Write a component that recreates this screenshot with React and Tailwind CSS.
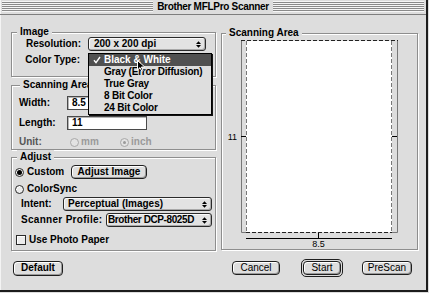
const Arrows = () => (
  <svg width="7" height="9" viewBox="0 0 7 9">
    <path d="M1 4 L3.5 1.2 L6 4 Z M1 5 L3.5 7.8 L6 5 Z" fill="#000" />
  </svg>
);

function Popup({ className = "", textClass = "pl-[5px]", children }) {
  return (
    <div
      className={`flex h-[14px] items-center rounded-[3px] border border-[#2a2a2a] bg-[#e2e2e2] shadow-[inset_1px_1px_0_#fafafa,inset_-1px_-1px_0_#a8a8a8] ${className}`}
    >
      <span className={`flex-1 overflow-hidden whitespace-nowrap text-[10px] font-bold leading-[12px] ${textClass}`}>
        {children}
      </span>
      <span className="flex w-[13px] shrink-0 items-center justify-center">
        <Arrows />
      </span>
    </div>
  );
}

function Button({ className = "", bold = false, children }) {
  return (
    <div
      className={`flex items-center justify-center rounded-[4px] border border-[#1e1e1e] bg-[#dedede] text-[10px] leading-[12px] shadow-[inset_1px_1px_0_#fff,inset_-1px_-1px_0_#9a9a9a] ${
        bold ? "font-bold" : "font-normal"
      } ${className}`}
    >
      {children}
    </div>
  );
}

function Field({ className = "", children }) {
  return (
    <div
      className={`flex h-[14px] items-center border border-[#4a4a4a] bg-white pl-[4px] text-[10px] font-bold leading-[12px] shadow-[inset_1px_1px_0_#b5b5b5] ${className}`}
    >
      {children}
    </div>
  );
}

function Radio({ on = false, disabled = false }) {
  return (
    <span
      className={`flex h-[9px] w-[9px] shrink-0 items-center justify-center rounded-full border ${
        disabled ? "border-[#a8a8a8] bg-[#e2e2e2]" : "border-[#2a2a2a] bg-[#ececec] shadow-[inset_1px_1px_0_#fff]"
      }`}
    >
      {on && (
        <span className={`rounded-full ${disabled ? "h-[3px] w-[3px] bg-[#9a9a9a]" : "h-[5px] w-[5px] bg-black"}`} />
      )}
    </span>
  );
}

function Group({ label, labelLeft, className = "", children }) {
  return (
    <div className={`relative border border-[#8e8e8e] shadow-[inset_1px_1px_0_#fff,1px_1px_0_#fff] ${className}`}>
      <span className={`absolute top-[-8px] bg-[#dddddd] px-[3px] text-[10px] font-bold leading-[14px] ${labelLeft}`}>
        {label}
      </span>
      {children}
    </div>
  );
}

const Label = ({ className = "", children }) => (
  <span className={`shrink-0 whitespace-nowrap text-[10px] font-bold leading-[12px] ${className}`}>{children}</span>
);

function TitleBar() {
  const stripes =
    "h-[11px] flex-1 bg-[image:repeating-linear-gradient(to_bottom,#f6f6f6_0px,#f6f6f6_1px,#8a8a8a_1px,#8a8a8a_2px)]";
  return (
    <div className="flex h-[15px] items-start border-b border-[#7e7e7e] px-[2px] pt-[1px]">
      <div className={stripes} />
      <span className="px-[4px] text-[10px] font-bold leading-[12px] tracking-[-0.3px]">Brother MFLPro Scanner</span>
      <div className={stripes} />
    </div>
  );
}

function ColorMenu() {
  const items = ["Gray (Error Diffusion)", "True Gray", "8 Bit Color", "24 Bit Color"];
  return (
    <div className="absolute left-[88px] top-[53px] w-[124px] border border-black bg-[#dedede] shadow-[1px_1px_0_#111]">
      <div className="relative flex h-[12px] items-center bg-[#505050] pl-[15px] text-[10px] font-bold leading-[12px] text-white">
        <svg className="absolute left-[4px] top-[2px]" width="8" height="8" viewBox="0 0 8 8">
          <path d="M1 4.2 L3 6.6 L7 1" stroke="#fff" strokeWidth="1.4" fill="none" />
        </svg>
        Black &amp; White
      </div>
      {items.map((t) => (
        <div key={t} className="flex h-[12px] items-center pl-[15px] text-[10px] font-bold leading-[12px] tracking-[-0.2px]">
          {t}
        </div>
      ))}
    </div>
  );
}

function Preview() {
  const ff = "Liberation Sans, Arial, sans-serif";
  return (
    <svg width="195" height="215" className="block">
      <rect x="24" y="7" width="146" height="191" fill="#fff" />
      <path d="M19.5 6 V198.5 H24 M175.5 6 V198.5 H170" stroke="#777" fill="none" />
      <path d="M19 6.5 H176" stroke="#222" strokeDasharray="4 2" />
      <path d="M24.5 7 V198 M169.5 7 V198" stroke="#777" strokeDasharray="4 2" />
      <path d="M24 198.5 H170" stroke="#222" strokeDasharray="4 2" />
      <path d="M19 102.5 H24 M170 102.5 H175" stroke="#000" />
      <path d="M24 204.5 H170 M96.5 199 V205" stroke="#000" />
      <text x="15" y="106" textAnchor="end" fontSize="9" fontFamily={ff}>
        11
      </text>
      <text x="96.5" y="213" textAnchor="middle" fontSize="9" fontFamily={ff}>
        8.5
      </text>
    </svg>
  );
}

export default function App() {
  return (
    <div className="relative h-[293px] w-[429px] overflow-hidden bg-[#dddddd] font-['Liberation_Sans',Arial,sans-serif] text-black">
      <div className="flex h-[292px] w-[428px] flex-col border-b-2 border-r-2 border-[#1c1c1c] shadow-[inset_1px_0_0_#f4f4f4]">
        <TitleBar />
        <div className="flex">
          <div className="ml-[11px] flex w-[205px] flex-col">
            <Group className="mt-[17px] h-[45px]" label="Image" labelLeft="left-[5px]">
              <div className="mt-[4px] flex h-[14px] items-center">
                <Label className="w-[69px] text-right">Resolution:</Label>
                <Popup className="ml-[7px] w-[118px]">200 x 200 dpi</Popup>
              </div>
              <div className="mt-[2px] flex h-[14px] items-center">
                <Label className="w-[68px] text-right">Color Type:</Label>
              </div>
            </Group>

            <Group className="mt-[8px] h-[65px]" label="Scanning Area" labelLeft="left-[8px]">
              <div className="mt-[10px] flex h-[14px] items-center pl-[7px]">
                <Label className="w-[48px]">Width:</Label>
                <Field className="w-[80px]">8.5</Field>
              </div>
              <div className="mt-[6px] flex h-[14px] items-center pl-[7px]">
                <Label className="w-[48px]">Length:</Label>
                <Field className="w-[80px]">11</Field>
              </div>
              <div className="mt-[5px] flex h-[14px] items-center pl-[7px]">
                <Label className="w-[51px] text-[#555]">Unit:</Label>
                <div className="flex w-[50px] items-center gap-[2px]">
                  <Radio disabled />
                  <Label className="text-[#9a9a9a]">mm</Label>
                </div>
                <div className="flex items-center gap-[2px]">
                  <Radio disabled on />
                  <Label className="text-[#9a9a9a]">inch</Label>
                </div>
              </div>
            </Group>

            <Group className="mt-[7px] h-[94px]" label="Adjust" labelLeft="left-[5px]">
              <div className="mt-[7px] flex h-[14px] items-center pl-[3px]">
                <div className="flex w-[56px] items-center gap-[3px]">
                  <Radio on />
                  <Label>Custom</Label>
                </div>
                <Button bold className="h-[14px] w-[76px]">
                  Adjust Image
                </Button>
              </div>
              <div className="mt-[4px] flex h-[12px] items-center gap-[3px] pl-[3px]">
                <Radio />
                <Label>ColorSync</Label>
              </div>
              <div className="mt-[2px] flex h-[14px] items-center pl-[9px]">
                <Label className="w-[42px]">Intent:</Label>
                <Popup className="w-[149px]" textClass="pl-[4px]">
                  Perceptual (Images)
                </Popup>
              </div>
              <div className="mt-[2px] flex h-[14px] items-center pl-[9px]">
                <Label className="w-[85px] tracking-[0.3px]">Scanner Profile:</Label>
                <Popup className="w-[106px]" textClass="pl-[1px] tracking-[-0.4px]">
                  Brother DCP-8025D
                </Popup>
              </div>
              <div className="mt-[7px] flex h-[12px] items-center gap-[3px] pl-[4px]">
                <span className="h-[10px] w-[10px] border border-[#2a2a2a] bg-[#ececec] shadow-[inset_1px_1px_0_#fff]" />
                <Label>Use Photo Paper</Label>
              </div>
            </Group>
          </div>

          <Group className="ml-[5px] mt-[18px] h-[217px] w-[197px]" label="Scanning Area" labelLeft="left-[4px]">
            <Preview />
          </Group>
        </div>

        <div className="mt-[8px] flex h-[18px] items-center">
          <Button bold className="ml-[13px] h-[15px] w-[50px]">
            Default
          </Button>
          <Button className="ml-[169px] h-[14px] w-[48px]">Cancel</Button>
          <div className="ml-[21px] h-[18px] w-[42px] rounded-[5px] border border-[#1e1e1e] p-[1px]">
            <Button className="h-[14px] w-full">Start</Button>
          </div>
          <Button className="ml-[19px] h-[14px] w-[50px]">PreScan</Button>
        </div>
      </div>

      <ColorMenu />

      <svg className="absolute left-[137px] top-[60px]" width="9" height="12" viewBox="0 0 9 12">
        <path d="M0.5 0.5 V10 L3 7.6 L4.8 11.2 L6.2 10.5 L4.4 7 H7.8 Z" fill="#000" stroke="#fff" strokeWidth="1" />
      </svg>
    </div>
  );
}
